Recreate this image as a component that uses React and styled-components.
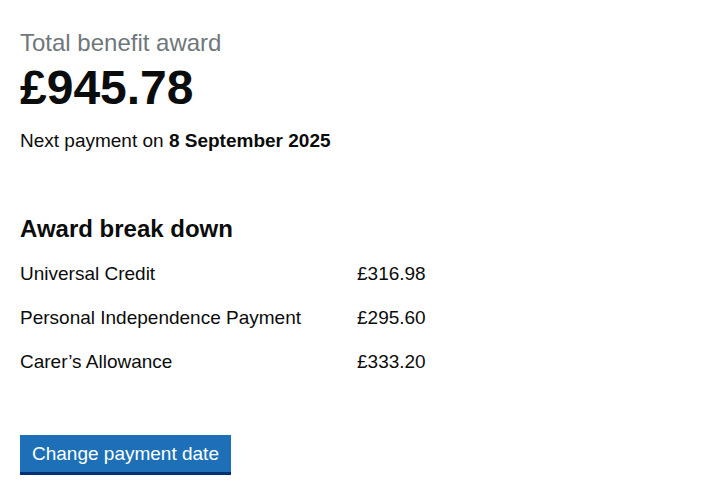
import styled, { createGlobalStyle } from "styled-components";

const GlobalStyle = createGlobalStyle`
  body {
    margin: 0;
    background: #ffffff;
    font-family: "Liberation Sans", Arial, sans-serif;
    color: #0b0c0c;
  }
`;

const awards = [
  { name: "Universal Credit", amount: "£316.98" },
  { name: "Personal Independence Payment", amount: "£295.60" },
  { name: "Carer’s Allowance", amount: "£333.20" },
];

export default function App() {
  return (
    <>
      <GlobalStyle />
      <Page>
        <Caption>Total benefit award</Caption>
        <Total>£945.78</Total>
        <NextPayment>
          Next payment on <strong>8 September 2025</strong>
        </NextPayment>

        <Heading>Award break down</Heading>
        <Breakdown>
          {awards.map((a) => (
            <Row key={a.name}>
              <Label>{a.name}</Label>
              <Amount>{a.amount}</Amount>
            </Row>
          ))}
        </Breakdown>

        <Button type="button">Change payment date</Button>
      </Page>
    </>
  );
}

const Page = styled.main`
  padding: 28px 20px 20px;
  display: flex;
  flex-direction: column;
  align-items: flex-start;
`;

const Caption = styled.span`
  font-size: 24px;
  line-height: 30px;
  color: #6f777b;
`;

const Total = styled.h1`
  margin: 3px 0 0;
  font-size: 48px;
  line-height: 54px;
  font-weight: 700;
`;

const NextPayment = styled.p`
  margin: 13px 0 0;
  font-size: 19px;
  line-height: 25px;
`;

const Heading = styled.h2`
  margin: 61px 0 0;
  font-size: 24px;
  line-height: 30px;
  font-weight: 700;
`;

const Breakdown = styled.div`
  margin-top: 17px;
  display: flex;
  flex-direction: column;
  gap: 19px;
`;

const Row = styled.div`
  display: grid;
  grid-template-columns: 337px auto;
  font-size: 19px;
  line-height: 25px;
`;

const Label = styled.span``;

const Amount = styled.span``;

const Button = styled.button`
  margin-top: 61px;
  padding: 8px 12px;
  border: none;
  border-radius: 0;
  background: #1d70b8;
  box-shadow: 0 3px 0 #003078;
  color: #ffffff;
  font-family: "Liberation Sans", Arial, sans-serif;
  font-size: 19px;
  line-height: 21px;
  cursor: pointer;
`;
